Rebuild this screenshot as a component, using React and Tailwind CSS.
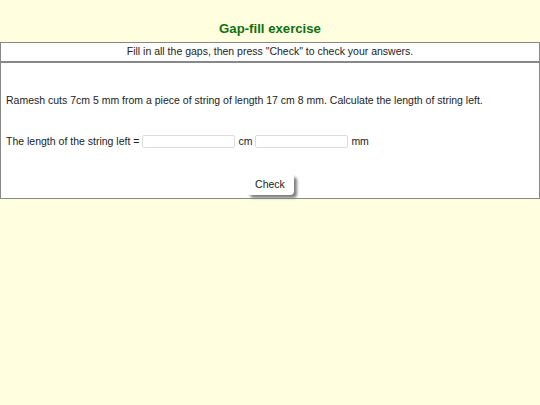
import React from 'react';

const App = () => {
  return (
    <div className="min-h-screen bg-[#ffffe0] text-[#000000]" style={{ fontFamily: '"Liberation Sans", Arial, sans-serif' }}>
      <h2 className="pt-[21px] pb-[5px] text-center text-[13.2px] leading-[16px] font-bold text-[#107010]">
        Gap-fill exercise
      </h2>

      <div className="border border-[#888888] bg-white">
        {/* instructions */}
        <div className="h-[18px] flex items-center justify-center text-[10.5px] text-[#222222]">
          Fill in all the gaps, then press "Check" to check your answers.
        </div>
        <div className="h-[2px] bg-[#888888]" />

        {/* exercise body */}
        <div className="px-[5px] pt-[31px] pb-[3px] text-[10.5px] leading-[13px] text-[#222222]">
          <p>Ramesh cuts 7cm 5 mm from a piece of string of length 17 cm 8 mm. Calculate the length of string left.</p>

          <div className="mt-[28px] h-[13px] flex items-center">
            <span>The length of the string left =</span>
            <input
              type="text"
              className="ml-[3px] w-[93px] h-[13px] border border-[#dddddd] rounded-[2px] bg-white outline-none"
            />
            <span className="ml-[3px]">cm</span>
            <input
              type="text"
              className="ml-[3px] w-[93px] h-[13px] border border-[#dddddd] rounded-[2px] bg-white outline-none"
            />
            <span className="ml-[3px]">mm</span>
          </div>

          <div className="mt-[26px] flex justify-center">
            <button className="w-[47px] h-[21px] rounded-[4px] bg-white text-[10.5px] text-[#222222] shadow-[3px_3px_3px_#808080]">
              Check
            </button>
          </div>
        </div>
      </div>
    </div>
  );
};

export default App;
